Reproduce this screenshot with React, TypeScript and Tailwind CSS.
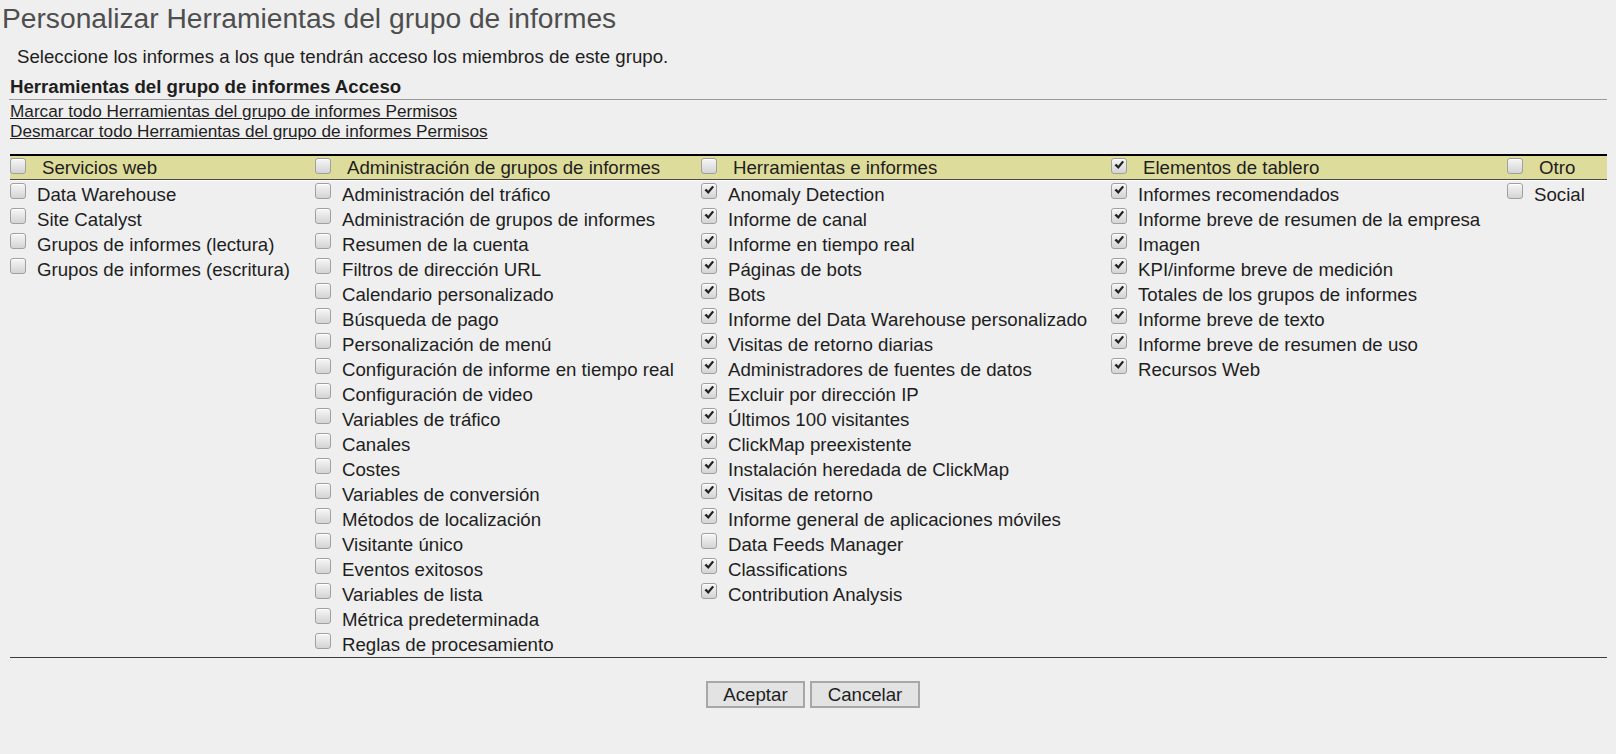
import React from "react";

type Item = { label: string; checked: boolean };
type Group = { title: string; checked: boolean; width: string; items: Item[] };

const on = (label: string): Item => ({ label, checked: true });
const off = (label: string): Item => ({ label, checked: false });

const groups: Group[] = [
  {
    title: "Servicios web",
    checked: false,
    width: "w-[305px]",
    items: [
      off("Data Warehouse"),
      off("Site Catalyst"),
      off("Grupos de informes (lectura)"),
      off("Grupos de informes (escritura)"),
    ],
  },
  {
    title: "Administración de grupos de informes",
    checked: false,
    width: "w-[386px]",
    items: [
      off("Administración del tráfico"),
      off("Administración de grupos de informes"),
      off("Resumen de la cuenta"),
      off("Filtros de dirección URL"),
      off("Calendario personalizado"),
      off("Búsqueda de pago"),
      off("Personalización de menú"),
      off("Configuración de informe en tiempo real"),
      off("Configuración de video"),
      off("Variables de tráfico"),
      off("Canales"),
      off("Costes"),
      off("Variables de conversión"),
      off("Métodos de localización"),
      off("Visitante único"),
      off("Eventos exitosos"),
      off("Variables de lista"),
      off("Métrica predeterminada"),
      off("Reglas de procesamiento"),
    ],
  },
  {
    title: "Herramientas e informes",
    checked: false,
    width: "w-[410px]",
    items: [
      on("Anomaly Detection"),
      on("Informe de canal"),
      on("Informe en tiempo real"),
      on("Páginas de bots"),
      on("Bots"),
      on("Informe del Data Warehouse personalizado"),
      on("Visitas de retorno diarias"),
      on("Administradores de fuentes de datos"),
      on("Excluir por dirección IP"),
      on("Últimos 100 visitantes"),
      on("ClickMap preexistente"),
      on("Instalación heredada de ClickMap"),
      on("Visitas de retorno"),
      on("Informe general de aplicaciones móviles"),
      off("Data Feeds Manager"),
      on("Classifications"),
      on("Contribution Analysis"),
    ],
  },
  {
    title: "Elementos de tablero",
    checked: true,
    width: "w-[396px]",
    items: [
      on("Informes recomendados"),
      on("Informe breve de resumen de la empresa"),
      on("Imagen"),
      on("KPI/informe breve de medición"),
      on("Totales de los grupos de informes"),
      on("Informe breve de texto"),
      on("Informe breve de resumen de uso"),
      on("Recursos Web"),
    ],
  },
  {
    title: "Otro",
    checked: false,
    width: "flex-1",
    items: [off("Social")],
  },
];

const Checkbox: React.FC<{ checked: boolean; className?: string }> = ({ checked, className = "" }) => (
  <span
    className={`relative inline-block w-4 h-4 shrink-0 rounded-[3px] border border-[#a0a0a0] bg-gradient-to-b from-[#f6f6f6] to-[#d4d4d4] shadow-[inset_0_1px_0_#fff] ${className}`}
  >
    {checked && (
      <svg viewBox="0 0 16 16" className="absolute left-[1px] top-[0px] w-[13px] h-[13px]">
        <path d="M1.8 7.8 L4.2 5.9 L6.4 8.4 L11.4 2 L13.6 3.7 L6.6 12.4 Z" fill="#222" />
      </svg>
    )}
  </span>
);

export default function App() {
  return (
    <div className="min-h-screen bg-[#efefef] text-[#1e1e1e] font-['Liberation_Sans',Arial,sans-serif]">
      <h1 className="pt-[2px] pl-[2px] text-[28.2px] leading-[32px] font-normal text-[#4e4e4e]">
        Personalizar Herramientas del grupo de informes
      </h1>
      <p className="mt-[12px] pl-[17px] text-[18.67px] leading-[22px]">
        Seleccione los informes a los que tendrán acceso los miembros de este grupo.
      </p>

      <div className="pl-[9px] pr-[9px]">
        <div className="mt-[8px] pl-[1px] pb-[1px] border-b border-[#9a9a9a] text-[18.67px] leading-[22px] font-bold">
          Herramientas del grupo de informes Acceso
        </div>
        <div className="mt-[1px] pl-[1px] flex flex-col items-start text-[17.2px] leading-[20px]">
          <a href="#" className="underline text-[#1e1e1e]">
            Marcar todo Herramientas del grupo de informes Permisos
          </a>
          <a href="#" className="underline text-[#1e1e1e]">
            Desmarcar todo Herramientas del grupo de informes Permisos
          </a>
        </div>

        <div className="mt-[13px] ml-[1px] text-[18.67px]">
          <div className="border-t-2 border-black">
            <div className="flex h-[24px] bg-[#dedc9b] border-b border-[#4a4a4a] leading-[24px]">
              {groups.map((g) => (
                <div key={g.title} className={`${g.width} flex items-start`}>
                  <Checkbox checked={g.checked} className="mt-[2px]" />
                  <span className="ml-[16px] whitespace-nowrap">{g.title}</span>
                </div>
              ))}
            </div>
            <div className="h-px bg-white" />
          </div>

          <div className="flex pt-[1px]">
            {groups.map((g) => (
              <div key={g.title} className={`${g.width} flex flex-col`}>
                {g.items.map((it) => (
                  <div key={it.label} className="flex items-start h-[25px] leading-[25px]">
                    <Checkbox checked={it.checked} className="mt-[1px]" />
                    <span className="ml-[11px] whitespace-nowrap">{it.label}</span>
                  </div>
                ))}
              </div>
            ))}
          </div>
          <div className="border-t border-[#3c3c3c]" />
        </div>

        <div className="mt-[23px] pl-[10px] flex justify-center gap-[5px] text-[18.67px]">
          <button className="w-[99px] h-[27px] border-2 border-[#a7a7a7] bg-[#e3e3e3] leading-[22px] text-[#1e1e1e]">
            Aceptar
          </button>
          <button className="w-[110px] h-[27px] border-2 border-[#a7a7a7] bg-[#e3e3e3] leading-[22px] text-[#1e1e1e]">
            Cancelar
          </button>
        </div>
      </div>
    </div>
  );
}
